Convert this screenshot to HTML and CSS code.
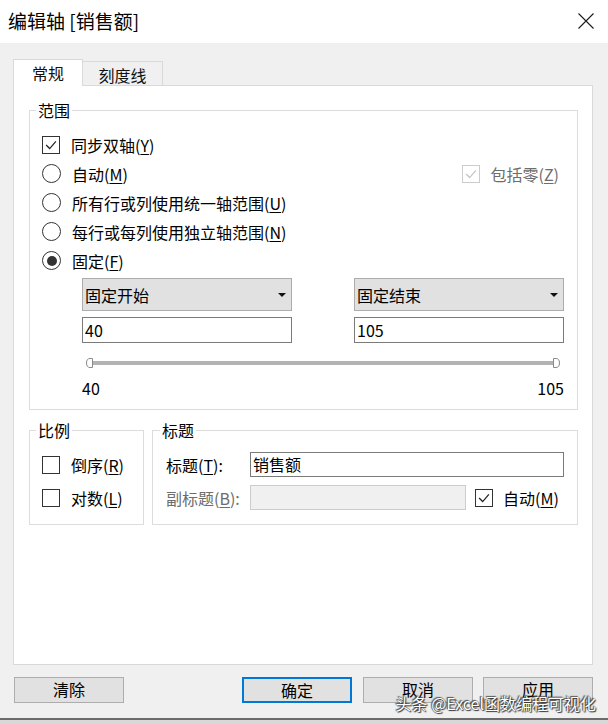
FILE: index.html
```html
<!DOCTYPE html>
<html lang="zh-CN">
<head>
  <meta charset="UTF-8">
  <title>编辑轴 [销售额]</title>
  <link rel="stylesheet" href="styles.css">
</head>
<body>
  <div class="window">
    <div class="titlebar">
      <span class="title">编辑轴 [销售额]</span>
      <svg class="close" width="16" height="16" viewBox="0 0 16 16">
        <path d="M0.5 0.5 L15.5 15.5 M15.5 0.5 L0.5 15.5" stroke="#1a1a1a" stroke-width="1.1" fill="none"/>
      </svg>
    </div>

    <div class="main">
      <div class="tabs">
        <div class="tab active">常规</div>
        <div class="tab">刻度线</div>
      </div>

      <div class="panel">
        <fieldset class="group range">
          <legend>范围</legend>
          <div class="row">
            <span class="check"><svg viewBox="0 0 18 18"><polyline points="3.5,9 7.5,13 14.5,5" /></svg></span>
            <span>同步双轴(<u>Y</u>)</span>
          </div>
          <div class="row split">
            <div class="opt"><span class="radio"></span><span>自动(<u>M</u>)</span></div>
            <div class="opt disabled"><span class="check"><svg viewBox="0 0 18 18"><polyline points="3.5,9 7.5,13 14.5,5" /></svg></span><span>包括零(<u>Z</u>)</span></div>
          </div>
          <div class="row"><span class="radio"></span><span>所有行或列使用统一轴范围(<u>U</u>)</span></div>
          <div class="row"><span class="radio"></span><span>每行或每列使用独立轴范围(<u>N</u>)</span></div>
          <div class="row"><span class="radio on"></span><span>固定(<u>F</u>)</span></div>

          <div class="fixed">
            <div class="fixed-col">
              <div class="select">固定开始<span class="arrow"></span></div>
              <div class="input">40</div>
            </div>
            <div class="fixed-col">
              <div class="select">固定结束<span class="arrow"></span></div>
              <div class="input">105</div>
            </div>
          </div>

          <div class="slider">
            <svg width="482" height="12" viewBox="0 0 482 12">
              <rect x="8" y="4" width="466" height="4" fill="#b3b3b3"/>
              <path d="M10.5 1.5 H8 A3.5 4.5 0 0 0 8 10.5 H10.5 Z" fill="#fff" stroke="#8a8a8a"/>
              <path d="M471.5 1.5 H474 A3.5 4.5 0 0 1 474 10.5 H471.5 Z" fill="#fff" stroke="#8a8a8a"/>
            </svg>
          </div>
          <div class="slider-labels"><span>40</span><span>105</span></div>
        </fieldset>

        <div class="lower">
          <fieldset class="group scale">
            <legend>比例</legend>
            <div class="row tall"><span class="check empty"></span><span>倒序(<u>R</u>)</span></div>
            <div class="row tall"><span class="check empty"></span><span>对数(<u>L</u>)</span></div>
          </fieldset>

          <fieldset class="group caption">
            <legend>标题</legend>
            <div class="row tall">
              <span class="field-label">标题(<u>T</u>):</span>
              <div class="input wide">销售额</div>
            </div>
            <div class="row tall">
              <span class="field-label muted">副标题(<u>B</u>):</span>
              <div class="input off"></div>
              <div class="opt auto"><span class="check"><svg viewBox="0 0 18 18"><polyline points="3.5,9 7.5,13 14.5,5" /></svg></span><span>自动(<u>M</u>)</span></div>
            </div>
          </fieldset>
        </div>
      </div>

      <div class="buttons">
        <button class="btn">清除</button>
        <div class="btn-group">
          <button class="btn primary">确定</button>
          <button class="btn">取消</button>
          <button class="btn">应用</button>
        </div>
      </div>
    </div>
  </div>

  <div class="watermark">头条 @Excel函数编程可视化</div>
</body>
</html>
```

FILE: styles.css
```css
body {
  margin: 0;
  width: 608px;
  height: 724px;
  overflow: hidden;
  background: #d8d8d8;
  font-family: "Noto Sans CJK SC", "Microsoft YaHei", sans-serif;
  font-size: 16px;
  color: #000;
  position: relative;
}
u {
  text-decoration-thickness: 1px;
  text-underline-offset: 2px;
}
.window {
  height: 718px;
  background: #f0f0f0;
  border-bottom: 2px solid #6b6b6b;
}
.titlebar {
  height: 43px;
  background: #fff;
  display: flex;
  align-items: center;
  justify-content: space-between;
  padding: 0 14px 2px 8px;
  box-sizing: border-box;
}
.title {
  font-size: 19px;
  line-height: 24px;
}
.main {
  padding: 16px 15px 0 13px;
}

/* tabs */
.tabs {
  display: flex;
  align-items: flex-end;
  height: 26px;
}
.tab {
  box-sizing: border-box;
  height: 24px;
  width: 81px;
  margin-left: -1px;
  border: 1px solid #d9d9d9;
  border-bottom: none;
  text-align: center;
  line-height: 26px;
  color: #111;
}
.tab.active {
  width: 70px;
  height: 27px;
  margin-left: 0;
  margin-bottom: -1px;
  background: #fff;
  line-height: 26px;
  position: relative;
  z-index: 1;
}
.panel {
  box-sizing: border-box;
  height: 580px;
  background: #fff;
  border: 1px solid #d9d9d9;
  padding: 14px 14px 0 15px;
}

/* group boxes */
.group {
  margin: 0;
  min-width: 0;
  border: 1px solid #dcdcdc;
  padding: 0 13px 10px 12px;
}
.group legend {
  padding: 0 2px;
  margin-left: -6px;
  line-height: 20px;
}
.range {
  padding-top: 10px;
  padding-bottom: 11px;
}
.row {
  display: flex;
  align-items: center;
  height: 29px;
  gap: 11px;
}
.row.tall {
  height: 33px;
}
.row.split {
  justify-content: space-between;
}
.opt {
  display: flex;
  align-items: center;
  gap: 11px;
}
.opt.disabled {
  color: #6d6d6d;
  margin-right: 5px;
}
.check {
  box-sizing: border-box;
  width: 18px;
  height: 18px;
  border: 1px solid #333;
  background: #fff;
  flex: none;
}
.check svg {
  display: block;
  width: 16px;
  height: 16px;
}
.check polyline {
  fill: none;
  stroke: #222;
  stroke-width: 1.4;
}
.disabled .check {
  border-color: #cccccc;
}
.disabled .check polyline {
  stroke: #c4c4c4;
}
.radio {
  box-sizing: border-box;
  width: 19px;
  height: 19px;
  border: 1px solid #333;
  border-radius: 50%;
  flex: none;
  display: flex;
  align-items: center;
  justify-content: center;
}
.radio.on::after {
  content: "";
  width: 10px;
  height: 10px;
  border-radius: 50%;
  background: #333;
}

/* fixed range */
.fixed {
  display: flex;
  justify-content: space-between;
  padding-left: 40px;
  margin-top: 3px;
}
.fixed-col {
  width: 210px;
}
.select {
  box-sizing: border-box;
  height: 33px;
  background: #e1e1e1;
  border: 1px solid #adadad;
  padding-left: 2px;
  display: flex;
  align-items: center;
  justify-content: space-between;
}
.arrow {
  width: 0;
  height: 0;
  border-left: 4px solid transparent;
  border-right: 4px solid transparent;
  border-top: 4px solid #111;
  margin-right: 5px;
}
.input {
  box-sizing: border-box;
  height: 26px;
  border: 1px solid #7a7a7a;
  background: #fff;
  padding-left: 2px;
  line-height: 24px;
  margin-top: 6px;
}
.slider {
  padding-left: 40px;
  margin-top: 14px;
  height: 12px;
}
.slider svg {
  display: block;
}
.slider-labels {
  display: flex;
  justify-content: space-between;
  padding-left: 40px;
  margin-top: 9px;
  line-height: 20px;
}

/* scale + caption */
.lower {
  display: flex;
  gap: 8px;
  margin-top: 10px;
}
.scale {
  width: 115px;
  box-sizing: border-box;
  padding-top: 8px;
}
.caption {
  flex: 1;
  padding-left: 13px;
  padding-top: 8px;
}
.caption .row {
  gap: 0;
}
.field-label {
  width: 84px;
  flex: none;
}
.muted {
  color: #6d6d6d;
}
.caption .input {
  margin-top: 0;
  height: 25px;
  line-height: 23px;
}
.input.wide {
  flex: 1;
}
.input.off {
  width: 216px;
  background: #f0f0f0;
  border-color: #cccccc;
}
.opt.auto {
  margin-left: 9px;
  gap: 10px;
}

/* buttons */
.buttons {
  display: flex;
  justify-content: space-between;
  margin-top: 12px;
  padding-left: 1px;
}
.btn-group {
  display: flex;
  gap: 11px;
}
.btn {
  box-sizing: border-box;
  width: 110px;
  height: 26px;
  background: #e1e1e1;
  border: 1px solid #adadad;
  font-family: inherit;
  font-size: 16px;
  color: #000;
  padding: 0 0 2px;
  line-height: 22px;
}
.btn.primary {
  border: 2px solid #0078d7;
}
.btn-group .btn:last-child {
  margin-left: -1px;
}

.watermark {
  position: absolute;
  right: 12px;
  bottom: 11px;
  font-size: 16px;
  line-height: 20px;
  color: #fff;
  text-shadow: 0 0 1px #222, 1px 1px 1px #333, -1px -1px 1px #555;
}
```
